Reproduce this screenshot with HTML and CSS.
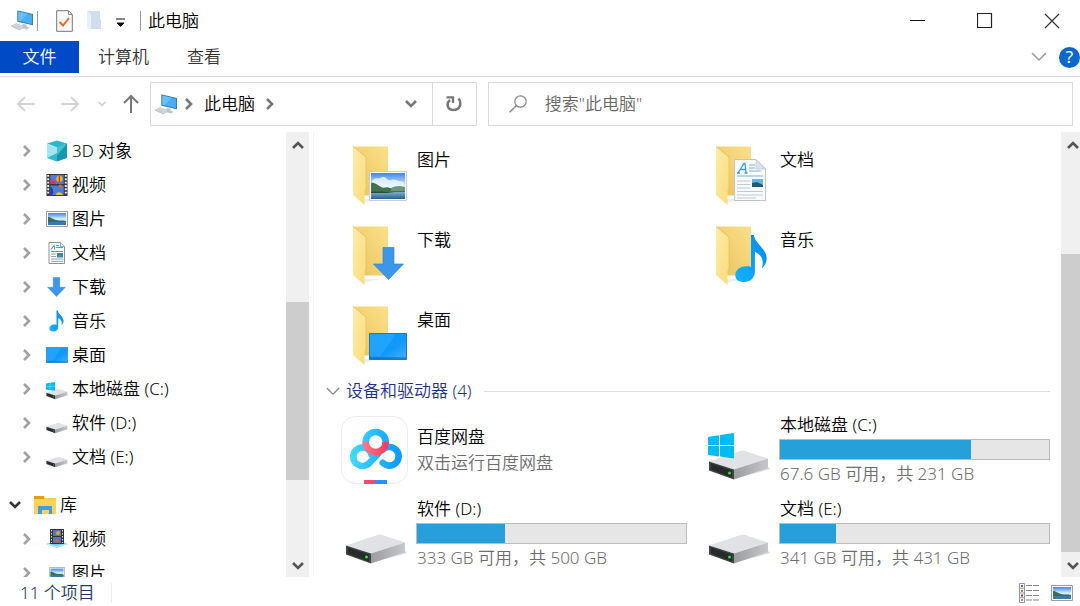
FILE: index.html
```html
<!DOCTYPE html>
<html lang="zh-CN">
<head>
<meta charset="utf-8">
<meta name="viewport" content="width=device-width, initial-scale=1">
<title>此电脑</title>
<link rel="stylesheet" href="styles.css">
</head>
<body>
<svg class="sprite" width="0" height="0" aria-hidden="true">
  <defs>
    <linearGradient id="g-back" x1="0" y1="1" x2="1" y2="0"><stop offset="0" stop-color="#e8c35c"/><stop offset="1" stop-color="#fbe08a"/></linearGradient>
    <linearGradient id="g-flap" x1="0" y1="0" x2="1" y2="1"><stop offset="0" stop-color="#ffecab"/><stop offset="1" stop-color="#fbdb78"/></linearGradient>
    <linearGradient id="g-sky" x1="0" y1="0" x2="0" y2="1"><stop offset="0" stop-color="#3f86ea"/><stop offset=".5" stop-color="#d3efff"/><stop offset="1" stop-color="#a8d4f0"/></linearGradient>
    <linearGradient id="g-sea" x1="0" y1="0" x2="0" y2="1"><stop offset="0" stop-color="#7fb0ca"/><stop offset="1" stop-color="#265f92"/></linearGradient>
    <linearGradient id="g-desk" x1="0" y1="0" x2="1" y2="1"><stop offset="0" stop-color="#0a9cfb"/><stop offset=".6" stop-color="#1199fa"/><stop offset="1" stop-color="#45b3ff"/></linearGradient>
    <linearGradient id="g-side" x1="0" y1="0" x2="1" y2="0"><stop offset="0" stop-color="#9b9c9f"/><stop offset="1" stop-color="#c6c7ca"/></linearGradient>
    <linearGradient id="g-note" x1="0" y1="1" x2="1" y2="0"><stop offset="0" stop-color="#14b4fb"/><stop offset="1" stop-color="#0088fb"/></linearGradient>
    <linearGradient id="g-pan" gradientUnits="userSpaceOnUse" x1="10" y1="0" x2="62" y2="0"><stop offset="0" stop-color="#43dcff"/><stop offset="1" stop-color="#0a98ff"/></linearGradient>
    <linearGradient id="g-red" x1="0" y1="0" x2="1" y2="0"><stop offset="0" stop-color="#ff7486"/><stop offset="1" stop-color="#ff3a5c"/></linearGradient>
  </defs>

  <symbol id="folder" viewBox="0 0 68 68">
    <path d="M22 57h17l-15 4z" fill="#eeeeee"/>
    <path d="M13 4.500h35v49H24L13 50z" fill="url(#g-back)"/>
    <path d="M13 4.500 24.500 14.500 26 16v31l-1.500 1.500V63L13 53z" fill="url(#g-flap)"/>
    <path d="M13 4.500 26 15v33" fill="none" stroke="#e3bd57" stroke-width=".6"/>
  </symbol>
  <symbol id="photo" viewBox="0 0 38 30">
    <path d="M.5.500h37v29H.5z" fill="#fcfcfc" stroke="#c9ccd0"/>
    <path d="M2 2h34v26H2z" fill="url(#g-sky)"/>
    <path d="M3 10c3-4 6-2 8-3s5-2 7 1 6-1 9 1 6 0 8 3v5H3z" fill="#eef9ff" opacity=".8"/>
    <path d="M2 12c4-1 6 2 10 4s5-1 9 1 9 1 15 3v3H2z" fill="#43724d"/>
    <path d="M22 17c4-2 8-3 14-1v4H22z" fill="#6d967a"/>
    <path d="M2 21h34v7H2z" fill="url(#g-sea)"/>
    <path d="M2 21c8-1 16 0 24 1H2z" fill="#244c3e"/>
  </symbol>
  <symbol id="photo-small" viewBox="0 0 22 16">
    <path d="M.5.500h21v15H.5z" fill="#fff" stroke="#9a9ea3"/>
    <path d="M2 2h18v12H2z" fill="url(#g-sky)"/>
    <path d="M2 6c3 0 4 2 8 3s6 0 10 1v2H2z" fill="#37704f"/>
    <path d="M2 11h18v3H2z" fill="#3c7ba8"/>
  </symbol>
  <symbol id="document" viewBox="0 0 32 42">
    <path d="M.5.500H22L31.500 10v31.500H.5z" fill="#f8fafc" stroke="#bfc4c9"/>
    <path d="M22 .5V10h9.500z" fill="#dde1e5" stroke="#bfc4c9" stroke-width=".7"/>
    <path d="m4 14 6-9.500h1L12 14m-6-3.500h5.500M3 14h3m4.500 0h3" fill="none" stroke="#3c9ede" stroke-width="1.300"/>
    <path d="M15 6h6M15 9h6M15 12h12M3 17h26" stroke="#9dcdf0" stroke-width="1.300"/>
    <path d="M3 22h13M3 25.500h13M3 29h13M3 32.500h26M3 36h26M3 39h19" stroke="#c3c9d0"/>
    <path d="M18 20h11v8H18z" fill="#5eb5f0"/><path d="m18 24 5-1 6 3v2H18z" fill="#1d5d6f"/>
  </symbol>
  <symbol id="document-small" viewBox="0 0 18 22">
    <path d="M1 .5h11.500l4 4v17H1z" fill="#fff" stroke="#8d9399"/>
    <path d="M12.500.500v4h4" fill="#e4e7ea" stroke="#8d9399" stroke-width=".8"/>
    <path d="m3 7.500 3-4 .8 4M8 3.500h3M8 5.500h7M3 9.500h12" fill="none" stroke="#3d9fe0" stroke-width="1.100"/>
    <path d="M3 12h5M3 14.500h5M3 17h12M3 19.300h12" stroke="#8b96a1" stroke-width=".9"/>
    <path d="M9 11h6v4.500H9z" fill="#3a86c0"/>
  </symbol>
  <symbol id="arrow" viewBox="0 0 32 33"><path d="M10.500.500h11V17H31L16 32.500 1 17h9.500z" fill="#3c97e8" stroke="#2b87d9" stroke-width=".7"/></symbol>
  <symbol id="note" viewBox="0 0 32 50">
    <path d="M16 1h3c1 9 13 14 13 24 0 4-2 8-5 10 3-9-1-14-7-17v20c0 7-5 11-11 11S0 46 0 42c0-6 6-9 11-9 2 0 4 0 5 1z" fill="url(#g-note)"/>
  </symbol>
  <symbol id="desktop" viewBox="0 0 38 28" preserveAspectRatio="none">
    <path d="M.5.500h37v27H.5z" fill="url(#g-desk)" stroke="#1277c4"/>
    <path d="M1 1h26L11 24H1z" fill="#37b0ff" opacity=".45"/>
    <path d="M1 26h36" stroke="#145d9d"/>
  </symbol>
  <symbol id="drive" viewBox="0 0 62 32">
    <path d="m26 30 36-10-3-3z" fill="#d8d8d8"/>
    <path d="M1 12.500 34 1.500c1 0 2 0 3 .5l23 7.500-34 11z" fill="#e1e2e5"/>
    <path d="M26 20.500 60 9.500V19L26 30.500z" fill="url(#g-side)"/>
    <path d="M1 12.500 26 20.500v10L1 21.500z" fill="#3f4143"/>
    <path d="m3 14.500 21 7v7L3 20.500z" fill="#292a2b"/>
    <circle cx="21.500" cy="24" r="1.500" fill="#2fe33a"/>
  </symbol>
  <symbol id="winlogo" viewBox="0 0 26 26"><path d="M0 4 11 2.300V12H0zM12 2.100 26 0v12H12zM0 13h11v10.500L0 22zM12 13h14v12.500l-14-2z" fill="#00bcf2"/></symbol>
  <symbol id="pc" viewBox="0 0 22 20">
    <path d="m7.500 1 14 3.200V14l-14-3.200z" fill="#4aaef3" stroke="#3c7da8" stroke-width="1"/>
    <path d="m8 1.500 9 2-7 7.300-2-.5z" fill="#7bccff" opacity=".6"/>
    <path d="m12 13 4 1v2l3 1-3 1.500-6-1.700 2-1.200z" fill="#c1c8ce"/>
    <path d="m1 15.500 5-2.500 8 3-5 3z" fill="#dce2e6" stroke="#a8b0b6" stroke-width=".6"/>
    <path d="m3 15.500 6 2.200m-4-3.200 6 2.200" stroke="#a1abb4" stroke-width=".5"/>
  </symbol>
  <symbol id="cube" viewBox="0 0 22 22">
    <path d="m11 .5 10 3-10 4-10-4z" fill="#27b9cd"/><path d="m1 3.500 10 4v14L1 18z" fill="#a4e6f0"/><path d="m21 3.500-10 4v14L21 18z" fill="#1797ad"/>
    <path d="M1 18 11 13v8.500z" fill="#2fbccb"/><path d="m11 7.500 10-4-10 12z" fill="#45c1d2"/>
  </symbol>
  <symbol id="film" viewBox="0 0 22 23">
    <path d="M0 0h22v23H0z" fill="#383838"/><path d="M4 1h14v9.500H4zM4 12h14v10H4z" fill="#4d7be0"/>
    <path d="M4 7c4-3 5 2 6 1v2.500H4z" fill="#d8365d"/><circle cx="13.500" cy="5" r="3.300" fill="#e8bb20"/><path d="M13.500 2v7" stroke="#bd3d23" stroke-width="1.500"/>
    <circle cx="14.500" cy="13" r="2" fill="#dd6434"/><path d="M10 22c0-4 6-4 7 0z" fill="#edc022"/><path d="M4 13c3 2 4 6 2 9H4z" fill="#243f93"/>
    <path d="M1.800 1v21M20.200 1v21" stroke="#f1f1f1" stroke-width="2" stroke-dasharray="2 1.500"/>
  </symbol>
  <symbol id="library" viewBox="0 0 22 20">
    <path d="M0 2C0 1 1 1 2 1h8l1 2h11v16H0z" fill="#ffcc4a"/><path d="M0 1h10v3H0z" fill="#e1a10d"/><path d="M0 5h22v13H0z" fill="#ffd260"/>
    <path d="M4 11h14v8h-3v-4H8v4H4z" fill="#3c9ee4"/>
  </symbol>
  <symbol id="libvideo" viewBox="0 0 22 20">
    <path d="m0 16 11-4 11 4-11 4z" fill="#75cef5"/><path d="m2 16 9 3 9-3" fill="none" stroke="#c1eefd"/>
    <path d="M4 1h14v15H4z" fill="#333"/><path d="M7 2h8v6H7zM7 9h8v6H7z" fill="#5173c5"/><circle cx="12" cy="5" r="2" fill="#dda829"/><circle cx="11" cy="13" r="2" fill="#c56637"/>
    <path d="M5.500 2v13m11-13v13" stroke="#ddd" stroke-dasharray="1.500 1.500"/>
  </symbol>
  <symbol id="right" viewBox="0 0 10 14"><path d="m2 2 5 5-5 5" fill="none" stroke="currentColor" stroke-width="2.600"/></symbol>
  <symbol id="down" viewBox="0 0 14 10"><path d="m2 2 5 5 5-5" fill="none" stroke="currentColor" stroke-width="2.600"/></symbol>
  <symbol id="thin-down" viewBox="0 0 16 10"><path d="m1 1 7 7 7-7" fill="none" stroke="currentColor" stroke-width="1.500"/></symbol>
  <symbol id="back" viewBox="0 0 20 16"><path d="M19 8H2m7-7L2 8l7 7" fill="none" stroke="currentColor" stroke-width="2"/></symbol>
</svg>

<div class="explorer">
  <header class="titlebar">
    <svg class="title-pc" viewBox="0 0 22 20" aria-hidden="true"><use href="#pc"/></svg>
    <span class="divider"></span>
    <button class="quick quick-check" aria-label="属性"><svg width="17" height="22" viewBox="0 0 17 22"><path d="M.7.700h11.800l3.800 3.800v16.800H.7z" fill="#f8f8f8" stroke="#777"/><path d="M12.500.700v3.800h3.800" fill="none" stroke="#888"/><path d="m3.500 12 3.500 3.500L13 8" fill="none" stroke="#f26522" stroke-width="1.900"/></svg></button>
    <button class="quick quick-folder" aria-label="新建文件夹"><svg width="15" height="21" viewBox="0 0 15 21"><path d="M0 1h13v8l1 1v9H4L0 17z" fill="#d1def0"/><path d="m0 1 4 3v16l-4-2z" fill="#e9f0fa"/></svg></button>
    <button class="quick quick-more" aria-label="自定义快速访问工具栏"><svg width="9" height="9" viewBox="0 0 9 9"><path d="M0 1h9M1 5h7L4.500 8.500z" stroke="#111" fill="#111"/></svg></button>
    <span class="divider"></span>
    <h1 class="title">此电脑</h1>
    <div class="window-buttons">
      <button aria-label="最小化"><svg width="16" height="16" viewBox="0 0 16 16"><path d="M0 7.500h15" stroke="#111"/></svg></button>
      <button aria-label="最大化"><svg width="16" height="16" viewBox="0 0 16 16"><path d="M.5.500h14v14H.5z" fill="none" stroke="#222" stroke-width="1.200"/></svg></button>
      <button aria-label="关闭"><svg width="16" height="16" viewBox="0 0 16 16"><path d="m1 1 14 14m0-14L1 15" stroke="#333" stroke-width="1.200"/></svg></button>
    </div>
  </header>

  <nav class="ribbon">
    <button class="tab tab-file">文件</button>
    <button class="tab">计算机</button>
    <button class="tab">查看</button>
    <div class="ribbon-end">
      <button class="expand" aria-label="展开功能区"><svg width="16" height="10"><use href="#thin-down"/></svg></button>
      <button class="help" aria-label="帮助">?</button>
    </div>
  </nav>

  <div class="navbar">
    <div class="history">
      <button class="faint" aria-label="后退"><svg width="20" height="16"><use href="#back"/></svg></button>
      <button class="faint forward" aria-label="前进"><svg width="20" height="16"><use href="#back"/></svg></button>
      <button class="faint" aria-label="最近浏览的位置"><svg width="10" height="8" viewBox="0 0 14 10"><use href="#down"/></svg></button>
      <button class="up" aria-label="上移"><svg width="16" height="20" viewBox="0 0 16 20"><path d="M8 19V2M1 9l7-7 7 7" fill="none" stroke="#777" stroke-width="2"/></svg></button>
    </div>
    <div class="address">
      <svg width="23" height="21" viewBox="0 0 22 20" aria-hidden="true"><use href="#pc"/></svg>
      <svg class="crumb-arrow" width="10" height="14" aria-hidden="true"><use href="#right"/></svg>
      <button class="crumb">此电脑</button>
      <svg class="crumb-arrow" width="10" height="14" aria-hidden="true"><use href="#right"/></svg>
      <button class="address-drop" aria-label="以前的位置"><svg width="14" height="10"><use href="#down"/></svg></button>
      <button class="refresh" aria-label="刷新"><svg width="16" height="18" viewBox="0 0 16 18"><path d="M12.500 3.500c3 3.500 2.500 11-4.500 11.500C1 15 0 8.500 4 5" fill="none" stroke="#777" stroke-width="2.500"/><path d="M.5 2.300H7V8" fill="none" stroke="#777" stroke-width="2.300"/></svg></button>
    </div>
    <label class="search">
      <svg width="18" height="18" viewBox="0 0 18 18" aria-hidden="true"><circle cx="11.500" cy="6.500" r="5.700" fill="none" stroke="#888" stroke-width="1.200"/><path d="M7.500 10.500.7 17.300" stroke="#888" stroke-width="1.400"/></svg>
      <input type="text" aria-label="搜索" placeholder='搜索"此电脑"'>
    </label>
  </div>

  <div class="body">
    <aside class="tree">
      <ul class="tree-list">
        <li><button class="twist" aria-label="展开"><svg width="10" height="14"><use href="#right"/></svg></button><svg class="ico" viewBox="0 0 22 22"><use href="#cube"/></svg><span>3D 对象</span></li>
        <li><button class="twist" aria-label="展开"><svg width="10" height="14"><use href="#right"/></svg></button><svg class="ico" viewBox="0 0 22 22"><use href="#film"/></svg><span>视频</span></li>
        <li><button class="twist" aria-label="展开"><svg width="10" height="14"><use href="#right"/></svg></button><svg class="ico" viewBox="0 0 22 22"><use href="#photo-small" y="3" width="22" height="16"/></svg><span>图片</span></li>
        <li><button class="twist" aria-label="展开"><svg width="10" height="14"><use href="#right"/></svg></button><svg class="ico" viewBox="0 0 22 22"><use href="#document-small" x="2" width="18" height="22"/></svg><span>文档</span></li>
        <li><button class="twist" aria-label="展开"><svg width="10" height="14"><use href="#right"/></svg></button><svg class="ico" viewBox="0 0 22 22"><use href="#arrow" x="1" y="1" width="19" height="20"/></svg><span>下载</span></li>
        <li><button class="twist" aria-label="展开"><svg width="10" height="14"><use href="#right"/></svg></button><svg class="ico" viewBox="0 0 22 22"><use href="#note" x="3" width="15" height="22"/></svg><span>音乐</span></li>
        <li><button class="twist" aria-label="展开"><svg width="10" height="14"><use href="#right"/></svg></button><svg class="ico" viewBox="0 0 22 22"><use href="#desktop" y="3" width="22" height="16"/></svg><span>桌面</span></li>
        <li><button class="twist" aria-label="展开"><svg width="10" height="14"><use href="#right"/></svg></button><svg class="ico" viewBox="0 0 22 22"><use href="#drive" y="10" width="22" height="12"/><use href="#winlogo" y="4" width="9" height="9"/></svg><span>本地磁盘 (C:)</span></li>
        <li><button class="twist" aria-label="展开"><svg width="10" height="14"><use href="#right"/></svg></button><svg class="ico" viewBox="0 0 22 22"><use href="#drive" y="10" width="22" height="12"/></svg><span>软件 (D:)</span></li>
        <li><button class="twist" aria-label="展开"><svg width="10" height="14"><use href="#right"/></svg></button><svg class="ico" viewBox="0 0 22 22"><use href="#drive" y="10" width="22" height="12"/></svg><span>文档 (E:)</span></li>
        <li class="root"><button class="twist" aria-label="折叠"><svg width="14" height="10"><use href="#down"/></svg></button><svg class="ico" viewBox="0 0 22 22"><use href="#library" y="1" width="22" height="20"/></svg><span>库</span></li>
        <li><button class="twist" aria-label="展开"><svg width="10" height="14"><use href="#right"/></svg></button><svg class="ico" viewBox="0 0 22 22"><use href="#libvideo" width="22" height="20"/></svg><span>视频</span></li>
        <li><button class="twist" aria-label="展开"><svg width="10" height="14"><use href="#right"/></svg></button><svg class="ico" viewBox="0 0 22 22"><path d="m0 16 11-4 11 4-11 4z" fill="#75cef5"/><use href="#photo-small" x="3" y="5" width="16" height="12"/></svg><span>图片</span></li>
      </ul>
      <div class="scrollbar">
        <button aria-label="向上滚动"><svg class="flip" width="14" height="10"><use href="#down"/></svg></button>
        <div class="track"><div class="thumb" style="top:36.4%;height:45%"></div></div>
        <button aria-label="向下滚动"><svg width="14" height="10"><use href="#down"/></svg></button>
      </div>
    </aside>

    <main class="content">
      <div class="pane">
        <section class="folders">
          <div class="item"><svg class="big" viewBox="0 0 68 68"><use href="#folder"/><use href="#photo" x="29" y="29" width="38" height="30"/></svg><span class="name">图片</span></div>
          <div class="item"><svg class="big" viewBox="0 0 68 68"><use href="#folder"/><use href="#document" x="31" y="17" width="32" height="42"/></svg><span class="name">文档</span></div>
          <div class="item"><svg class="big" viewBox="0 0 68 68"><use href="#folder"/><use href="#arrow" x="32" y="25" width="33" height="33"/></svg><span class="name">下载</span></div>
          <div class="item"><svg class="big" viewBox="0 0 68 68"><use href="#folder"/><use href="#note" x="32" y="12" width="32" height="49"/></svg><span class="name">音乐</span></div>
          <div class="item"><svg class="big" viewBox="0 0 68 68"><use href="#folder"/><use href="#desktop" x="29" y="31" width="38" height="27"/></svg><span class="name">桌面</span></div>
        </section>
        <h2 class="group"><svg width="14" height="9" viewBox="0 0 16 10" aria-hidden="true"><use href="#thin-down"/></svg><span>设备和驱动器 (4)</span></h2>
        <section class="drives">
          <div class="drive">
            <svg class="big" viewBox="0 0 68 68"><rect x="1.500" y=".5" width="66" height="67" rx="14" fill="#fff" stroke="#ececec"/>
              <g fill="none" stroke-width="6.600" stroke-linecap="round">
                <path d="M25.700 26a10 10 0 0 1 20 0" stroke="url(#g-pan)"/>
                <path d="M28.500 33.500A9.300 9.300 0 1 0 30 46.300L38 38" stroke="url(#g-pan)"/>
                <path d="M28.500 33.500a9.300 9.300 0 0 1 3 5" stroke="url(#g-pan)"/>
                <path d="M42.700 46.800a9.300 9.300 0 1 0 .5-13.500" stroke="url(#g-pan)"/>
                <path d="M25.700 26a10 10 0 0 0 20 0" stroke="url(#g-red)" stroke-linecap="butt"/>
              </g>
              <path d="M24 64h11v4H24z" fill="#ff486c"/><path d="M35 64h12v4H35z" fill="#2591ff"/></svg>
            <div class="info"><span class="name">百度网盘</span><span class="detail">双击运行百度网盘</span></div>
          </div>
          <div class="drive">
            <svg class="big" viewBox="0 0 68 68"><use href="#drive" x="5" y="33" width="62" height="32"/><use href="#winlogo" x="5" y="17" width="26" height="26"/></svg>
            <div class="info"><span class="name">本地磁盘 (C:)</span><div class="bar" role="progressbar" aria-label="本地磁盘 (C:)" aria-valuenow="71"><div class="fill" style="width:71%"></div></div><span class="detail">67.6 GB 可用，共 231 GB</span></div>
          </div>
          <div class="drive">
            <svg class="big" viewBox="0 0 68 68"><use href="#drive" x="5" y="33" width="62" height="32"/></svg>
            <div class="info"><span class="name">软件 (D:)</span><div class="bar" role="progressbar" aria-label="软件 (D:)" aria-valuenow="33"><div class="fill" style="width:32.6%"></div></div><span class="detail">333 GB 可用，共 500 GB</span></div>
          </div>
          <div class="drive">
            <svg class="big" viewBox="0 0 68 68"><use href="#drive" x="5" y="33" width="62" height="32"/></svg>
            <div class="info"><span class="name">文档 (E:)</span><div class="bar" role="progressbar" aria-label="文档 (E:)" aria-valuenow="21"><div class="fill" style="width:21%"></div></div><span class="detail">341 GB 可用，共 431 GB</span></div>
          </div>
        </section>
      </div>
      <div class="scrollbar scrollbar-main">
        <button aria-label="向上滚动"><svg class="flip" width="14" height="10"><use href="#down"/></svg></button>
        <div class="track"><div class="thumb" style="top:24.2%;height:75.2%"></div></div>
        <button aria-label="向下滚动"><svg width="14" height="10"><use href="#down"/></svg></button>
      </div>
    </main>
  </div>

  <footer class="status">
    <span class="count">11 个项目</span>
    <div class="views">
      <button aria-label="详细信息"><svg width="21" height="20" viewBox="0 0 21 20"><path d="M.5.500h5v19h-5zM.5 5.200h5M.5 10h5M.5 14.800h5" fill="#fff" stroke="#999"/><path d="M2 3h2" stroke="#3476b8" stroke-width="2"/><path d="M2 7.700h2" stroke="#907940" stroke-width="2"/><path d="M2 12.500h2" stroke="#c02c20" stroke-width="2"/><path d="M2 17h2" stroke="#74a389" stroke-width="2"/><path d="M7 2.500h6m1 0h6M7 7.500h6m1 0h6M7 12.500h6m1 0h6M7 17h6m1 0h6" stroke="#888"/></svg></button>
      <button aria-label="大图标"><svg width="22" height="16"><use href="#photo-small"/></svg></button>
    </div>
  </footer>
</div>
</body>
</html>
```
FILE: styles.css
```css
* {
  box-sizing: border-box;
}

body {
  margin: 0;
  background: #fff;
  color: #000;
  font-family: "Noto Sans", "Noto Sans CJK SC", sans-serif;
  font-size: 17px;
  font-weight: 350;
  line-height: 24px;
}

button {
  display: flex;
  align-items: center;
  justify-content: center;
  flex: none;
  padding: 0;
  border: 0;
  background: none;
  color: inherit;
  font: inherit;
}

svg {
  display: block;
  flex: none;
}

.sprite {
  position: absolute;
}

.explorer {
  display: flex;
  flex-direction: column;
  height: 100vh;
  overflow: hidden;
}

/* Title bar */
.titlebar {
  display: flex;
  align-items: center;
  height: 41px;
  padding-left: 10px;
}

.title-pc {
  width: 23px;
  height: 21px;
}

.divider {
  width: 1px;
  height: 20px;
  margin-left: 4px;
  background: #999;
}

.quick-check {
  margin-left: 18px;
}

.quick-folder {
  margin-left: 14px;
}

.quick-more {
  margin: 4px 11px 0 14px;
}

.title {
  margin: 0 0 0 7px;
  font-size: 17px;
  font-weight: 350;
}

.window-buttons {
  display: flex;
  gap: 11px;
  margin-left: auto;
}

.window-buttons button {
  width: 56px;
  height: 40px;
}

/* Ribbon tabs */
.ribbon {
  display: flex;
  padding-bottom: 3px;
  border-bottom: 1px solid #dcdcdc;
}

.tab {
  height: 32px;
  padding: 0 19px;
  color: #333;
}

.tab-file {
  min-width: 79px;
  background: #004ac6;
  color: #fff;
}

.ribbon-end {
  display: flex;
  align-items: center;
  gap: 12px;
  margin-left: auto;
}

.expand {
  color: #999;
}

.help {
  width: 21px;
  height: 21px;
  border-radius: 50%;
  background: #0868cb;
  color: #fff;
  font-weight: 400;
}

/* Navigation row */
.navbar {
  display: flex;
  gap: 11px;
  padding: 5px 7px 6px 16px;
}

.history {
  display: flex;
  align-items: center;
  justify-content: space-between;
  flex: none;
  width: 123px;
}

.faint {
  color: #d4d4d4;
}

.forward,
.flip {
  transform: rotate(180deg);
}

.forward {
  margin-left: 8px;
}

.address,
.search {
  display: flex;
  align-items: center;
  height: 44px;
  border: 1px solid #dadada;
}

.address {
  flex: 4 1 0;
  padding-left: 3px;
}

.crumb-arrow {
  margin: 0 7px;
  color: #777;
}

.crumb {
  margin: 0 3px;
}

.address-drop {
  width: 42px;
  margin-left: auto;
  color: #777;
}

.refresh {
  align-self: stretch;
  width: 44px;
  border-left: 1px solid #dadada;
}

.search {
  flex: 7 1 0;
  gap: 18px;
  padding-left: 20px;
}

.search input {
  flex: 1;
  min-width: 0;
  padding: 0;
  border: 0;
  outline: 0;
  background: none;
  font: inherit;
}

.search input::placeholder {
  color: #666;
  opacity: 1;
}

/* Body */
.body {
  display: flex;
  flex: 1;
  min-height: 0;
}

.tree {
  display: flex;
  flex: none;
  width: 314px;
  padding-right: 4px;
  border-right: 1px solid #f3f3f3;
}

.tree-list {
  flex: 1;
  margin: 0;
  padding: 2px 0 0;
  overflow: hidden;
  list-style: none;
}

.tree-list li {
  display: flex;
  align-items: center;
  height: 34px;
  padding-left: 17px;
  white-space: nowrap;
}

.tree-list .root {
  margin-top: 14px;
  padding-left: 5px;
}

.twist {
  width: 20px;
  margin-right: 9px;
  color: #a0a0a0;
}

.root .twist {
  color: #333;
}

.ico {
  width: 22px;
  height: 22px;
  margin-right: 4px;
}

.scrollbar {
  display: flex;
  flex-direction: column;
  flex: none;
  width: 23px;
  background: #f0f0f0;
  color: #555;
}

.scrollbar button {
  height: 26px;
}

.scrollbar .track + button {
  height: 23px;
}

.scrollbar-main {
  width: 19px;
}

.scrollbar-main button {
  justify-content: flex-end;
}

.track {
  position: relative;
  flex: 1;
}

.thumb {
  position: absolute;
  right: 0;
  left: 0;
  background: #cdcdcd;
}

.content {
  display: flex;
  flex: 1;
  min-width: 0;
}

.pane {
  flex: 1;
  min-width: 0;
  padding: 10px 11px 0 26px;
  overflow: hidden;
}

.folders,
.drives {
  display: grid;
  grid-template-columns: 1fr 1fr;
  column-gap: 16px;
}

.folders {
  row-gap: 12px;
}

.drives {
  row-gap: 11px;
}

.item,
.drive {
  display: flex;
  gap: 8px;
}

.drive {
  align-items: center;
  min-height: 73px;
}

.big {
  width: 68px;
  height: 68px;
}

.item .name {
  padding-top: 6px;
}

.group {
  display: flex;
  align-items: center;
  gap: 6px;
  margin: 9px 0 10px -14px;
  color: #1e3287;
  font-size: 17px;
  font-weight: 350;
}

.group svg {
  color: #888;
}

.group::after {
  flex: 1;
  height: 1px;
  margin-left: 6px;
  background: #dedede;
  content: "";
}

.info {
  display: flex;
  flex: 1;
  flex-direction: column;
  gap: 2px;
  min-width: 0;
}

.name,
.detail {
  padding-left: 1px;
}

.detail {
  color: #6d6d6d;
}

.bar {
  height: 21px;
  border: 1px solid #bcbcbc;
  background: #e6e6e6;
}

.fill {
  height: 100%;
  background: #26a0da;
}

/* Status bar */
.status {
  display: flex;
  align-items: center;
  flex: none;
  height: 29px;
  padding: 2px 7px 0 20px;
  color: #1e395b;
}

.count {
  padding-right: 16px;
  border-right: 1px solid #ededed;
  line-height: 20px;
}

.views {
  display: flex;
  align-items: center;
  gap: 11px;
  margin-left: auto;
}
```
